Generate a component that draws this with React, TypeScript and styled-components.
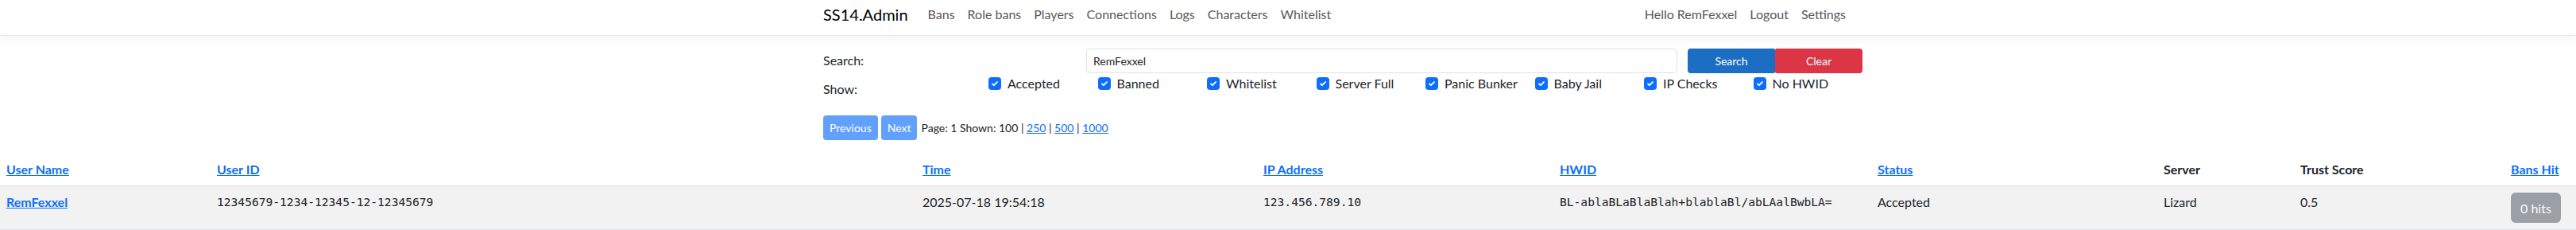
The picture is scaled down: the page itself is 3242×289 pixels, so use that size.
import React from "react";
import styled, { createGlobalStyle } from "styled-components";

const GlobalStyle = createGlobalStyle`
  html, body {
    margin: 0;
    padding: 0;
    background: #fff;
  }
  body {
    font-family: Lato, "Liberation Sans", sans-serif;
    font-size: 16px;
    line-height: 24px;
    color: #212529;
  }
  * {
    box-sizing: border-box;
  }
`;

const Navbar = styled.nav`
  height: 45px;
  padding-bottom: 8px;
  border-bottom: 1px solid #e5e5e5;
  box-shadow: 0 4px 12px rgba(0, 0, 0, 0.05);
  display: flex;
  align-items: center;
`;

const Container = styled.div`
  width: 1308px;
  margin-left: 1036px;
  display: flex;
  align-items: center;
`;

const Brand = styled.a`
  font-size: 20px;
  color: #000;
  margin-right: 17px;
  text-decoration: none;
`;

const NavList = styled.div<{ $right?: boolean }>`
  display: flex;
  margin-left: ${(p) => (p.$right ? "auto" : "0")};
  margin-right: ${(p) => (p.$right ? "13px" : "0")};
`;

const NavLink = styled.a`
  padding: 0 8px;
  color: #595959;
  text-decoration: none;
  white-space: nowrap;
`;

const Main = styled.main`
  padding-top: 16px;
`;

const Form = styled.div`
  width: 1308px;
  margin-left: 1036px;
  display: flex;
  flex-direction: column;
`;

const FormRow = styled.div`
  display: flex;
  align-items: flex-start;
`;

const Label = styled.label<{ $width: number; $pad: number }>`
  width: ${(p) => p.$width}px;
  padding-top: ${(p) => p.$pad}px;
  flex: none;
`;

const Input = styled.input`
  width: 744px;
  height: 31px;
  padding: 4px 8px;
  font-family: inherit;
  font-size: 14px;
  color: #212529;
  border: 1px solid #dee2e6;
  border-radius: 4px;
  outline: none;
`;

const ButtonPair = styled.div`
  display: flex;
  margin-left: 13px;
`;

const FormButton = styled.button<{ $bg: string; $side: "left" | "right" }>`
  width: 110px;
  height: 31px;
  border: none;
  color: #fff;
  font-family: inherit;
  font-size: 14px;
  background: ${(p) => p.$bg};
  border-radius: ${(p) => (p.$side === "left" ? "4px 2px 2px 4px" : "2px 4px 4px 2px")};
`;

const CheckGrid = styled.div`
  display: grid;
  grid-template-columns: repeat(8, 137.5px);
  padding-top: 1px;
`;

const CheckItem = styled.label`
  display: flex;
  align-items: center;
  gap: 8px;
  height: 24px;
  white-space: nowrap;
`;

const CheckBox = styled.span`
  width: 16px;
  height: 16px;
  border-radius: 4px;
  background: #0d6efd;
  display: flex;
  align-items: center;
  justify-content: center;
  flex: none;
`;

const Pager = styled.div`
  display: flex;
  align-items: center;
  margin-top: 21px;
  font-size: 14px;
  line-height: 21px;
`;

const PagerButton = styled.button`
  height: 31px;
  padding: 4px 8px;
  margin-right: 4px;
  border: none;
  border-radius: 4px;
  background: #0d6efd;
  opacity: 0.65;
  color: #fff;
  font-family: inherit;
  font-size: 14px;
`;

const PagerText = styled.span`
  margin-left: 1px;
  white-space: nowrap;
`;

const Link = styled.a<{ $bold?: boolean }>`
  color: #0d6efd;
  text-decoration: underline;
  font-weight: ${(p) => (p.$bold ? 700 : 400)};
`;

const Table = styled.table`
  width: 100%;
  margin-top: 17px;
  border-collapse: collapse;
  table-layout: fixed;
`;

const Th = styled.th`
  padding: 8px;
  text-align: left;
  font-weight: 700;
  border-bottom: 1px solid #dee2e6;
  white-space: nowrap;
`;

const Row = styled.tr`
  background: #f2f2f2;
  border-bottom: 1px solid #dee2e6;
`;

const Td = styled.td<{ $mono?: boolean }>`
  padding: 8px;
  vertical-align: top;
  white-space: nowrap;
  font-family: ${(p) =>
    p.$mono ? '"DejaVu Sans Mono", "Liberation Mono", monospace' : "inherit"};
  font-size: ${(p) => (p.$mono ? "14.6px" : "16px")};
`;

const HitsButton = styled.button`
  height: 38px;
  padding: 6px 12px;
  border: none;
  border-radius: 6px;
  background: #6c757d;
  opacity: 0.65;
  color: #fff;
  font-family: inherit;
  font-size: 16px;
`;

const Check = () => (
  <svg width="12" height="12" viewBox="0 0 20 20">
    <path
      d="m5 10.5 3.2 3.2 6.8-7"
      fill="none"
      stroke="#fff"
      strokeWidth="3"
      strokeLinecap="round"
      strokeLinejoin="round"
    />
  </svg>
);

const filters = [
  "Accepted",
  "Banned",
  "Whitelist",
  "Server Full",
  "Panic Bunker",
  "Baby Jail",
  "IP Checks",
  "No HWID",
];

const columns = [265, 888, 429, 373, 400, 360, 172, 265, 90];

export default function App() {
  return (
    <>
      <GlobalStyle />
      <Navbar>
        <Container>
          <Brand href="#">SS14.Admin</Brand>
          <NavList>
            {["Bans", "Role bans", "Players", "Connections", "Logs", "Characters", "Whitelist"].map(
              (item) => (
                <NavLink key={item} href="#">
                  {item}
                </NavLink>
              )
            )}
          </NavList>
          <NavList $right>
            <NavLink href="#">Hello RemFexxel</NavLink>
            <NavLink href="#">Logout</NavLink>
            <NavLink href="#">Settings</NavLink>
          </NavList>
        </Container>
      </Navbar>
      <Main>
        <Form>
          <FormRow>
            <Label $width={331} $pad={3}>Search:</Label>
            <Input defaultValue="RemFexxel" />
            <ButtonPair>
              <FormButton $bg="#1b6ec2" $side="left">Search</FormButton>
              <FormButton $bg="#dc3545" $side="right">Clear</FormButton>
            </ButtonPair>
          </FormRow>
          <FormRow>
            <Label $width={208} $pad={8}>Show:</Label>
            <CheckGrid>
              {filters.map((f) => (
                <CheckItem key={f}>
                  <CheckBox>
                    <Check />
                  </CheckBox>
                  {f}
                </CheckItem>
              ))}
            </CheckGrid>
          </FormRow>
          <Pager>
            <PagerButton>Previous</PagerButton>
            <PagerButton>Next</PagerButton>
            <PagerText>
              Page: 1 Shown: 100 | <Link href="#">250</Link> | <Link href="#">500</Link> |{" "}
              <Link href="#">1000</Link>
            </PagerText>
          </Pager>
        </Form>
        <Table>
          <colgroup>
            {columns.map((w, i) => (
              <col key={i} style={{ width: w }} />
            ))}
          </colgroup>
          <thead>
            <tr>
              <Th><Link href="#" $bold>User Name</Link></Th>
              <Th><Link href="#" $bold>User ID</Link></Th>
              <Th><Link href="#" $bold>Time</Link></Th>
              <Th><Link href="#" $bold>IP Address</Link></Th>
              <Th><Link href="#" $bold>HWID</Link></Th>
              <Th><Link href="#" $bold>Status</Link></Th>
              <Th>Server</Th>
              <Th>Trust Score</Th>
              <Th><Link href="#" $bold>Bans Hit</Link></Th>
            </tr>
          </thead>
          <tbody>
            <Row>
              <Td><Link href="#" $bold>RemFexxel</Link></Td>
              <Td $mono>12345679-1234-12345-12-12345679</Td>
              <Td>2025-07-18 19:54:18</Td>
              <Td $mono>123.456.789.10</Td>
              <Td $mono>BL-ablaBLaBlaBlah+blablaBl/abLAalBwbLA=</Td>
              <Td>Accepted</Td>
              <Td>Lizard</Td>
              <Td>0.5</Td>
              <Td><HitsButton>0 hits</HitsButton></Td>
            </Row>
          </tbody>
        </Table>
      </Main>
    </>
  );
}
